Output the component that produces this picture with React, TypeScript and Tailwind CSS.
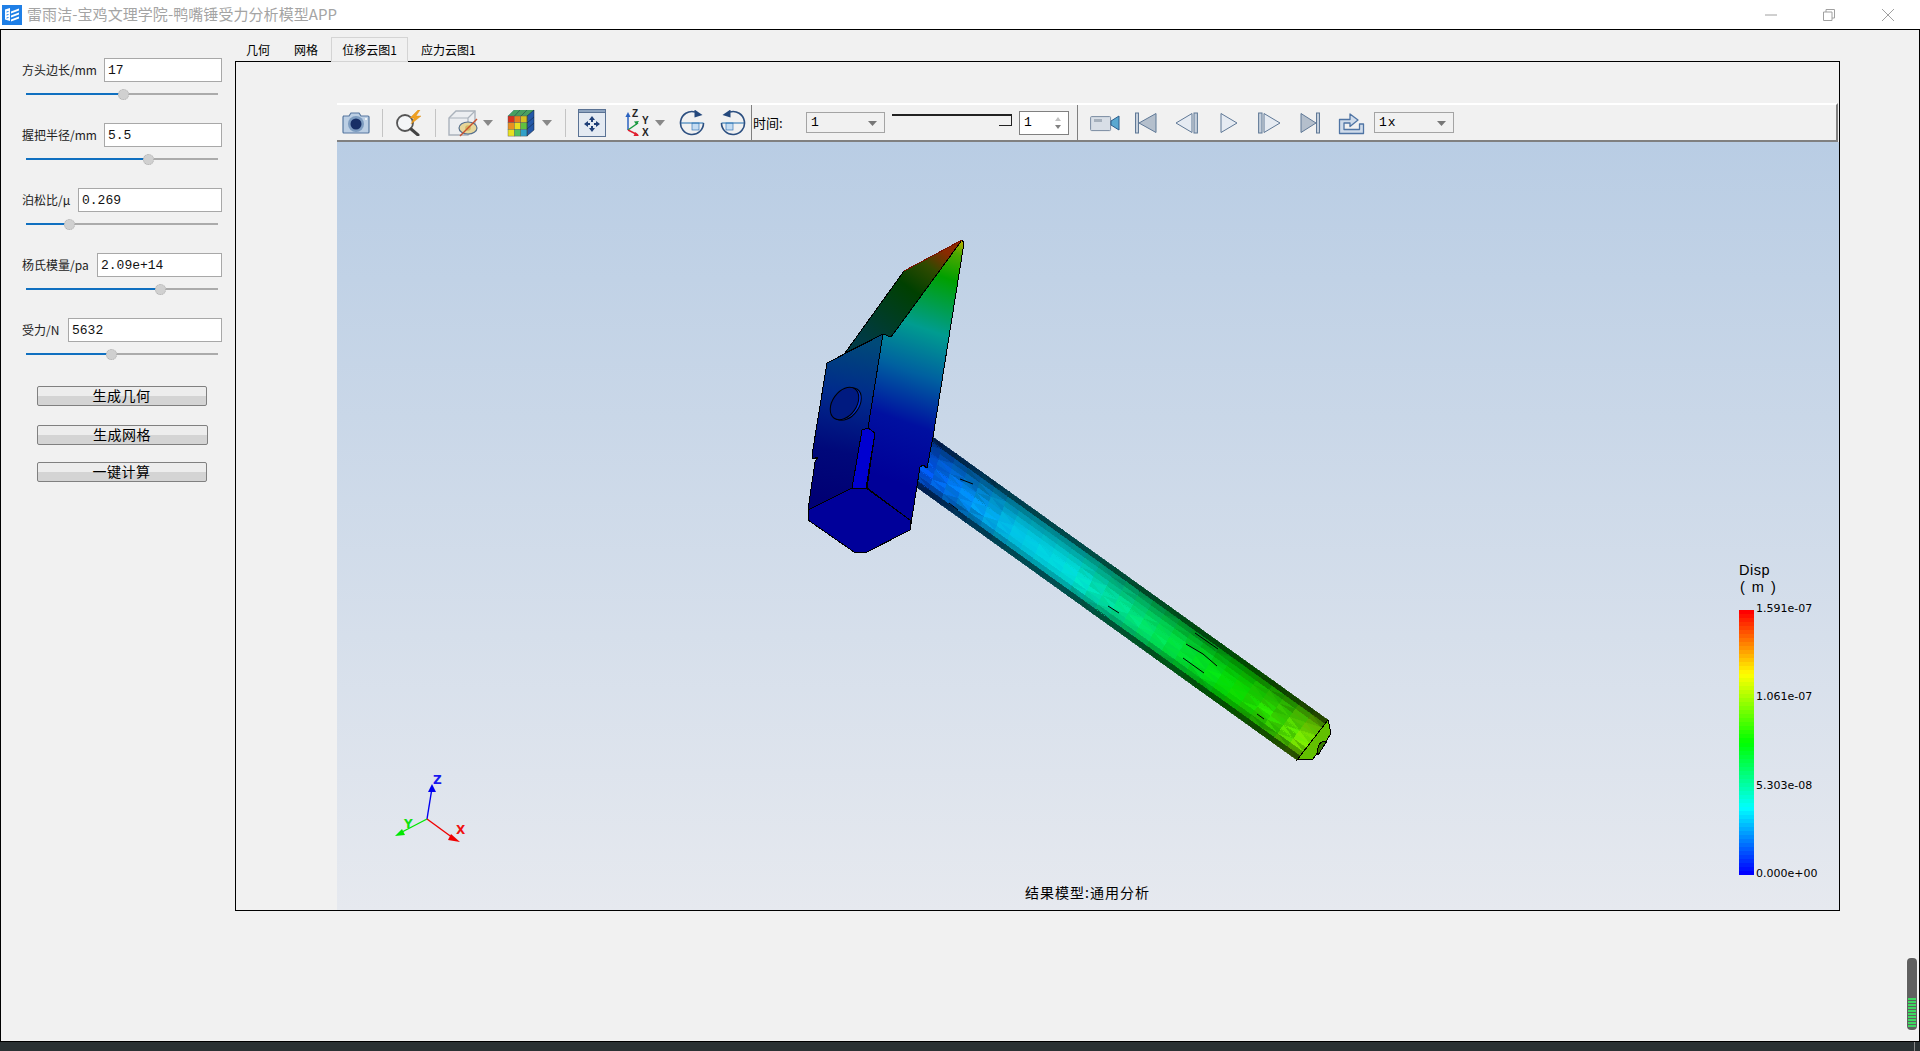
import React from "react";

const CJK = "font-['Noto_Sans_CJK_SC','Noto_Sans',sans-serif]";
const MONO = "font-['Liberation_Mono','Noto_Sans_CJK_SC',monospace]";

const params = [
  { label: "方头边长/mm", labelW: "w-[82px]", value: "17", fill: "w-[97px]" },
  { label: "握把半径/mm", labelW: "w-[82px]", value: "5.5", fill: "w-[122px]" },
  { label: "泊松比/μ", labelW: "w-[56px]", value: "0.269", fill: "w-[43px]" },
  { label: "杨氏模量/pa", labelW: "w-[75px]", value: "2.09e+14", fill: "w-[134px]" },
  { label: "受力/N", labelW: "w-[46px]", value: "5632", fill: "w-[85px]" },
];

function Param({ label, labelW, value, fill }: (typeof params)[number]) {
  return (
    <div className="flex h-[65px] flex-col">
      <div className="flex h-[24px] items-center">
        <span className={`${labelW} shrink-0 text-[12px] text-[#222] ${CJK}`}>{label}</span>
        <div className={`flex h-[24px] flex-1 items-center border border-[#a8a8a8] bg-white pl-[3px] pt-[1px] text-[13px] text-[#111] ${MONO}`}>
          {value}
        </div>
      </div>
      <div className="mx-[4px] mt-[7px] flex h-[10px] items-center">
        <div className={`h-[2px] ${fill} bg-[#1070c0]`} />
        <div className="relative z-10 -mx-[5px] h-[11px] w-[11px] shrink-0 rounded-full border border-dotted border-[#b0b0b0] bg-[#d0d0d0]" />
        <div className="h-[2px] flex-1 bg-[#ababab]" />
      </div>
    </div>
  );
}

function Btn({ children, className }: { children: React.ReactNode; className: string }) {
  return (
    <button className={`ml-[15px] flex h-[20px] items-center justify-center rounded-[2px] border border-[#808080] bg-[linear-gradient(#ededed_50%,#d4d4d4_50%)] pb-[2px] pr-[1px] text-[14px] tracking-[0.5px] text-black ${CJK} ${className}`}>
      {children}
    </button>
  );
}

const Sep = ({ ml }: { ml: string }) => <div className={`h-[28px] w-px shrink-0 bg-[#c4c4c4] ${ml}`} />;

const Tri = ({ ml }: { ml: string }) => (
  <svg width="10" height="6" viewBox="0 0 10 6" className={`shrink-0 ${ml}`}>
    <path d="M0 0H10L5 6Z" fill="#888" />
  </svg>
);

function Camera() {
  return (
    <svg width="28" height="24" viewBox="0 0 28 24" className="ml-[5px] shrink-0">
      <path d="M1 5h6l2-3h8l2 3h7a1 1 0 0 1 1 1v15a1 1 0 0 1-1 1H2a1 1 0 0 1-1-1V6a1 1 0 0 1 1-1z" fill="#bccfe4" stroke="#56779f" strokeWidth="1.2" />
      <circle cx="14" cy="13" r="8" fill="#7d9cc0" />
      <circle cx="14" cy="13" r="5.5" fill="#172f66" />
      <circle cx="24" cy="8" r="1" fill="#fff" />
    </svg>
  );
}
function Search() {
  return (
    <svg width="30" height="26" viewBox="0 0 30 26" className="ml-[12px] shrink-0">
      <circle cx="10" cy="13" r="8" fill="#f4f6f8" stroke="#555" strokeWidth="1.8" />
      <path d="M16 19L23 25" stroke="#444" strokeWidth="3" strokeLinecap="round" />
      <path d="M23 0L15 8h4l-3 6 10-8h-5l4-6z" fill="#f0a020" stroke="#d88a10" strokeWidth=".4" />
    </svg>
  );
}
function BoxEye() {
  return (
    <svg width="30" height="28" viewBox="0 0 30 28" className="ml-[12px] shrink-0">
      <path d="M1 9L8 2H27V19L20 26H1Z" fill="#eceef1" stroke="#aab2bc" strokeWidth="1.4" />
      <path d="M1 9H20V26M20 9L27 2" fill="none" stroke="#aab2bc" strokeWidth="1.2" />
      <ellipse cx="20" cy="19" rx="9" ry="6" fill="#e6d69a" stroke="#56708f" strokeWidth="1.2" />
      <circle cx="20" cy="19" r="2.8" fill="#d4b860" />
      <path d="M29 10L12 27" stroke="#c8502c" strokeWidth="1.4" />
    </svg>
  );
}
function ColorCube() {
  const rows = [
    ["#d83020", "#e88020", "#d8c020"],
    ["#e89020", "#e8e020", "#60c040"],
    ["#e8e020", "#50c060", "#30a0c8"],
  ];
  return (
    <svg width="28" height="28" viewBox="0 0 28 28" className="ml-[14px] shrink-0">
      <path d="M1 7L7 1H27V21L20 27V7Z" fill="#2458a8" />
      <path d="M1 7L7 1H27L20 7Z" fill="#48a060" />
      <path d="M13 1L7.5 7M20 1L14 7" stroke="#234" strokeWidth=".5" />
      {rows.map((r, j) =>
        r.map((c, i) => <rect key={`${i}${j}`} x={1 + i * 6.4} y={7 + j * 6.7} width="6.4" height="6.7" fill={c} stroke="#555" strokeWidth=".4" />),
      )}
      <path d="M20 7L27 1V21L20 27ZM20 14L27 8M20 20L27 14" fill="none" stroke="#123" strokeWidth=".5" />
    </svg>
  );
}
function Fit() {
  return (
    <svg width="28" height="28" viewBox="0 0 28 28" className="ml-[12px] shrink-0">
      <rect x=".5" y=".5" width="27" height="27" fill="#e4eaf2" stroke="#5a7294" />
      <rect x=".5" y=".5" width="27" height="3" fill="#8ea4c0" stroke="#5a7294" />
      <path d="M14 7l-3 4h2v2h2v-2h2zM14 23l-3-4h2v-2h2v2h2zM6 15l4-3v2h2v2h-2v2zM22 15l-4-3v2h-2v2h2v2z" fill="#1f3f78" />
    </svg>
  );
}
function AxesIcon() {
  return (
    <svg width="26" height="28" viewBox="0 0 26 28" className="ml-[18px] shrink-0">
      <path d="M4 21V6" stroke="#2a62c0" strokeWidth="1.5" />
      <path d="M4 3l-2.6 5h5.2z" fill="#2a62c0" />
      <path d="M4 21l10-7" stroke="#1a9a40" strokeWidth="1.5" />
      <path d="M15 12l-5 .5 2.5 3.5z" fill="#1a9a40" />
      <path d="M4 21l10 5" stroke="#e02030" strokeWidth="1.5" />
      <path d="M15 27l-3.5-4-2 4z" fill="#e02030" />
      <text x="8" y="8" fontSize="10" fontWeight="700" fontFamily="Liberation Sans" fill="#222">Z</text>
      <text x="18" y="15" fontSize="10" fontWeight="700" fontFamily="Liberation Sans" fill="#222">Y</text>
      <text x="18" y="27" fontSize="10" fontWeight="700" fontFamily="Liberation Sans" fill="#222">X</text>
    </svg>
  );
}
function Rotate({ flip, ml }: { flip?: boolean; ml: string }) {
  return (
    <svg width="26" height="26" viewBox="0 0 26 26" className={`shrink-0 ${ml}`} style={flip ? { transform: "scaleX(-1)" } : undefined}>
      <rect x="13" y="13" width="7" height="7" fill="#c4dcf2" stroke="#3a78b8" strokeWidth=".7" />
      <path d="M1.5 13H24.5" stroke="#1f6fb0" strokeWidth="1" />
      <path d="M24.5 13A11.5 11.5 0 1 1 16 1.9" fill="none" stroke="#2c4f80" strokeWidth="1.6" />
      <path d="M15.5 -.5L23.5 5 15.5 7.5Z" fill="#24487c" />
    </svg>
  );
}
function VideoCam() {
  return (
    <svg width="30" height="18" viewBox="0 0 30 18" className="ml-[12px] shrink-0">
      <rect x=".6" y="2.6" width="20" height="14" rx="1" fill="#d8dee6" stroke="#7a8ca2" />
      <rect x="4" y="5" width="8" height="3" fill="#a6b0bc" />
      <path d="M21 7l8-5v14l-8-5z" fill="#5aa8d0" stroke="#2a5c8c" />
    </svg>
  );
}
const pf = "#e6ebf2";
const ps = "#5f7896";
function First() {
  return (
    <svg width="22" height="22" viewBox="0 0 22 22" className="ml-[15px] shrink-0">
      <rect x=".5" y="1" width="3" height="20" fill="#c6d0dc" stroke={ps} />
      <path d="M21 1.5V20.5L4 11Z" fill="#b4bfcc" stroke={ps} />
    </svg>
  );
}
function Prev() {
  return (
    <svg width="23" height="22" viewBox="0 0 23 22" className="ml-[18px] shrink-0">
      <path d="M17 1.5V20.5L1 11Z" fill={pf} stroke={ps} />
      <rect x="19" y="1" width="3.4" height="20" fill="#c6d0dc" stroke={ps} />
    </svg>
  );
}
function Play() {
  return (
    <svg width="18" height="22" viewBox="0 0 18 22" className="ml-[22px] shrink-0">
      <path d="M1 1.5V20.5L17 11Z" fill={pf} stroke={ps} />
    </svg>
  );
}
function Next() {
  return (
    <svg width="23" height="22" viewBox="0 0 23 22" className="ml-[20px] shrink-0">
      <rect x=".6" y="1" width="3.4" height="20" fill="#c6d0dc" stroke={ps} />
      <path d="M6 1.5V20.5L22 11Z" fill={pf} stroke={ps} />
    </svg>
  );
}
function Last() {
  return (
    <svg width="20" height="22" viewBox="0 0 20 22" className="ml-[19px] shrink-0">
      <path d="M1 1.5V20.5L16 11Z" fill="#b4bfcc" stroke={ps} />
      <rect x="16.5" y="1" width="3" height="20" fill="#c6d0dc" stroke={ps} />
    </svg>
  );
}
function Export() {
  return (
    <svg width="27" height="24" viewBox="0 0 27 24" className="ml-[18px] shrink-0">
      <path d="M1.5 22.5V8.5H12V3L20 9L12 15.5V12H6V18.5H21.5V13H25.5V22.5Z" fill="#cfdbea" stroke="#4f74a4" strokeWidth="1.3" strokeLinejoin="round" />
    </svg>
  );
}

function Combo({ text, w, ml }: { text: string; w: string; ml: string }) {
  return (
    <div className={`flex h-[21px] shrink-0 items-center justify-between border border-[#a4a4a4] pl-[4px] pr-[7px] pt-[1px] text-[13px] tracking-[1px] text-black ${MONO} ${w} ${ml}`}>
      <span>{text}</span>
      <svg width="9" height="5" viewBox="0 0 9 5"><path d="M0 0H9L4.5 5Z" fill="#777" /></svg>
    </div>
  );
}

function TimeSlider() {
  return (
    <div className="ml-[7px] flex h-[24px] w-[120px] shrink-0 items-start pt-[2px]">
      <div className="mt-[1px] h-[2px] flex-1 bg-[#222]" />
      <div className="mt-[1px] h-[12px] w-[13px] border-r border-b border-[#222] bg-[#f1f1f1] shadow-[inset_0_2px_0_#222]" />
    </div>
  );
}

function Spin() {
  return (
    <div className={`ml-[7px] flex h-[24px] w-[50px] shrink-0 items-center justify-between border border-[#808080] bg-white pl-[4px] pr-[7px] pt-[1px] text-[13px] text-black ${MONO}`}>
      <span>1</span>
      <svg width="6" height="14" viewBox="0 0 6 14">
        <path d="M3 1L6 5H0Z" fill="#c0c0c0" />
        <path d="M3 13L0 9H6Z" fill="#808080" />
      </svg>
    </div>
  );
}

/* ---------- colour helpers for the 3D result ---------- */
type RGB = [number, number, number];
const hex = (c: RGB) => `rgb(${c.map((v) => Math.round(Math.max(0, Math.min(255, v)))).join(",")})`;
const stopsAlong: [number, RGB][] = [
  [0, [0, 80, 232]],
  [0.12, [0, 135, 232]],
  [0.24, [0, 195, 230]],
  [0.38, [0, 222, 220]],
  [0.52, [0, 224, 140]],
  [0.66, [0, 226, 60]],
  [0.8, [5, 222, 0]],
  [0.92, [55, 215, 0]],
  [1, [125, 220, 0]],
];
function along(t: number): RGB {
  for (let i = 1; i < stopsAlong.length; i++) {
    if (t <= stopsAlong[i][0]) {
      const [a, ca] = stopsAlong[i - 1];
      const [b, cb] = stopsAlong[i];
      const k = (t - a) / (b - a);
      return [0, 1, 2].map((n) => ca[n] + (cb[n] - ca[n]) * k) as RGB;
    }
  }
  return stopsAlong[stopsAlong.length - 1][1];
}
function shade(s: number) {
  const pts = [[0, 0.3], [0.06, 0.34], [0.09, 0.56], [0.2, 0.72], [0.34, 0.88], [0.5, 1], [0.72, 1], [0.84, 0.78], [0.92, 0.62], [0.95, 0.36], [1, 0.3]];
  for (let i = 1; i < pts.length; i++) {
    if (s <= pts[i][0]) {
      const k = (s - pts[i - 1][0]) / (pts[i][0] - pts[i - 1][0]);
      return pts[i - 1][1] + (pts[i][1] - pts[i - 1][1]) * k;
    }
  }
  return 0.3;
}
const rnd = (a: number, b: number) => {
  const v = Math.sin(a * 12.9898 + b * 78.233) * 43758.5453;
  return v - Math.floor(v);
};

function handlePoint(t: number, s: number): [number, number] {
  const A0 = [930, 435], A1 = [1328, 720], B0 = [915, 486], B1 = [1297, 760];
  const x0 = A0[0] + (B0[0] - A0[0]) * s, y0 = A0[1] + (B0[1] - A0[1]) * s;
  const x1 = A1[0] + (B1[0] - A1[0]) * s, y1 = A1[1] + (B1[1] - A1[1]) * s;
  return [x0 + (x1 - x0) * t, y0 + (y1 - y0) * t];
}

function HandleMesh() {
  const NX = 30, NY = 10;
  const tris: React.ReactNode[] = [];
  for (let i = 0; i < NX; i++) {
    for (let j = 0; j < NY; j++) {
      const t0 = i / NX, t1 = (i + 1) / NX, s0 = j / NY, s1 = (j + 1) / NY;
      const p = [handlePoint(t0, s0), handlePoint(t1, s0), handlePoint(t1, s1), handlePoint(t0, s1)];
      const flip = (i + j) % 2 === 0;
      const faces = flip ? [[0, 1, 2], [0, 2, 3]] : [[0, 1, 3], [1, 2, 3]];
      faces.forEach((f, k) => {
        const tm = (t0 + t1) / 2 + (k === 0 ? -0.006 : 0.006);
        const sm = (s0 + s1) / 2;
        const amp = tm < 0.2 || tm > 0.84 ? 0.2 : tm > 0.42 && tm < 0.76 ? 0.09 : 0.02;
        const l = shade(sm) * (1 + (rnd(i * 3 + k, j) - 0.5) * amp);
        const c = along(Math.max(0, tm));
        const fill = hex([c[0] * l, c[1] * l, c[2] * l]);
        tris.push(
          <polygon key={`${i}-${j}-${k}`} points={f.map((n) => p[n].join(",")).join(" ")} fill={fill} stroke={fill} strokeWidth="0.7" />,
        );
      });
    }
  }
  return <g>{tris}</g>;
}

function Hammer() {
  return (
    <svg viewBox="337 142 1502 768" className="absolute inset-0 h-full w-full">
      <defs>
        <linearGradient id="rightFace" gradientUnits="userSpaceOnUse" x1="972" y1="245" x2="890" y2="480">
          <stop offset="0" stopColor="#b8b000" />
          <stop offset="0.05" stopColor="#50a800" />
          <stop offset="0.16" stopColor="#00a000" />
          <stop offset="0.38" stopColor="#009c90" />
          <stop offset="0.56" stopColor="#0060a0" />
          <stop offset="0.76" stopColor="#0010a0" />
          <stop offset="1" stopColor="#000098" />
        </linearGradient>
        <linearGradient id="blade" gradientUnits="userSpaceOnUse" x1="940" y1="248" x2="870" y2="345">
          <stop offset="0" stopColor="#8a2a00" />
          <stop offset="0.18" stopColor="#304a00" />
          <stop offset="0.42" stopColor="#004000" />
          <stop offset="1" stopColor="#003a44" />
        </linearGradient>
        <linearGradient id="leftFace" gradientUnits="userSpaceOnUse" x1="862" y1="340" x2="830" y2="500">
          <stop offset="0" stopColor="#004a78" />
          <stop offset="0.35" stopColor="#002a8c" />
          <stop offset="0.7" stopColor="#00087a" />
          <stop offset="1" stopColor="#000074" />
        </linearGradient>
      </defs>
      <g shapeRendering="crispEdges">
        <HandleMesh />
        <polygon points="1328,720 1331,733 1327,740 1313,759 1297,760" fill="#62c000" stroke="#000" strokeWidth="1" />
        <path d="M1323 741C1318 744 1317 750 1318 755L1327 741Z" fill="#3a7a00" stroke="#000" strokeWidth="1" />
      </g>
      <g fill="none" stroke="#000" strokeWidth="1">
        <path d="M960 479L973 484" />
        <path d="M949 503L958 510" />
        <path d="M1108 606L1119 613" />
        <path d="M1195 633L1218 649" />
        <path d="M1186 644L1203 654L1217 666" />
        <path d="M1183 658L1204 673" />
        <path d="M1257 714L1264 719" />
      </g>
      <g stroke="#000" strokeWidth="1" strokeLinejoin="round" shapeRendering="crispEdges">
        <polygon points="845,353 883,334 891,337 962,240 904,271" fill="url(#blade)" />
        <polygon points="883,334 891,337 962,240 964,243 933,437 927,468 923,465 920,467 910,530 910,520 867,488 875,433 868,428" fill="url(#rightFace)" />
        <polygon points="827,363 883,334 868,428 862,430 852,488 808,510 815,462 818,457 813,459 812,455" fill="url(#leftFace)" />
        <polygon points="862,430 868,428 875,433 866,488 852,488" fill="#0000d0" />
        <polygon points="808,510 852,488 866,488 910,520 910,530 865,553 854,552 808,520" fill="#00009a" />
        <path d="M904 271L962 240" stroke="#7a1000" fill="none" />
      </g>
      <g stroke="#000" strokeWidth="1">
        <ellipse cx="847" cy="404" rx="12" ry="18" transform="rotate(35 847 404)" fill="#0030d8" />
        <ellipse cx="844.5" cy="403.5" rx="12" ry="18" transform="rotate(35 844.5 403.5)" fill="#001a80" />
      </g>
      {/* triad */}
      <g strokeWidth="1.4" fontFamily="DejaVu Sans" fontWeight="700" fontSize="12">
        <path d="M427 819L432 788" stroke="#0000f0" />
        <path d="M432 784l-4 8h8z" fill="#0000f0" />
        <text x="433" y="784" fill="#1818f0" stroke="none">Z</text>
        <path d="M427 819L402 832" stroke="#00e800" />
        <path d="M395 836l10-1-3-6z" fill="#00e800" />
        <text x="404" y="828" fill="#10e010" stroke="none">Y</text>
        <path d="M427 819L453 838" stroke="#f00000" />
        <path d="M460 842l-9-8-3 6z" fill="#f00000" />
        <text x="456" y="834" fill="#f01010" stroke="none">X</text>
      </g>
    </svg>
  );
}

function ColorBar() {
  const n = 66;
  const col = (f: number): string => {
    const st: [number, RGB][] = [[0, [255, 0, 0]], [0.24, [255, 255, 0]], [0.5, [0, 255, 0]], [0.75, [0, 255, 255]], [1, [0, 0, 255]]];
    for (let i = 1; i < st.length; i++) {
      if (f <= st[i][0]) {
        const k = (f - st[i - 1][0]) / (st[i][0] - st[i - 1][0]);
        return hex([0, 1, 2].map((m) => st[i - 1][1][m] + (st[i][1][m] - st[i - 1][1][m]) * k) as RGB);
      }
    }
    return "rgb(0,0,255)";
  };
  return (
    <svg width="15" height="265" viewBox="0 0 15 265" shapeRendering="crispEdges" className="shrink-0">
      {Array.from({ length: n }, (_, i) => (
        <rect key={i} x="0" y={(i * 265) / n} width="15" height={265 / n + 1} fill={col(i / (n - 1))} />
      ))}
    </svg>
  );
}

function Legend() {
  return (
    <div className="absolute left-[1402px] top-[420px] w-[90px] font-['DejaVu_Sans',sans-serif] text-black">
      <div className="font-['Liberation_Sans',sans-serif] text-[14.5px] leading-[17px] tracking-[0.5px]">Disp</div>
      <div className="pl-[1px] font-['Liberation_Sans',sans-serif] text-[14.5px] leading-[17px] tracking-[1.5px]">( m )</div>
      <div className="mt-[14px] flex">
        <ColorBar />
        <div className="-mt-[10px] ml-[2px] flex h-[283px] flex-col justify-between text-[11px] leading-[18px]">
          <span>1.591e-07</span>
          <span>1.061e-07</span>
          <span>5.303e-08</span>
          <span>0.000e+00</span>
        </div>
      </div>
    </div>
  );
}

export default function App() {
  return (
    <div className={`flex h-[1051px] w-[1920px] flex-col overflow-hidden bg-[#f1f1f1] ${CJK}`}>
      {/* title bar */}
      <div className="flex h-[30px] shrink-0 items-center border-b border-black bg-white">
        <svg width="20" height="20" viewBox="0 0 20 20" className="ml-[2px] shrink-0">
          <rect width="20" height="20" fill="#1f7fe6" />
          <path d="M3 4.5L8 3V16L3 14.5z" fill="#fff" />
          <path d="M9 6.5l8-3v2l-8 3zM9 10.5l8-3v2l-8 3zM9 14.5l8-3v2l-8 3z" fill="#fff" />
          <path d="M4.5 7l2-.5M4.5 10l2-.5M4.5 13l2-.5" stroke="#1f7fe6" strokeWidth="1" />
        </svg>
        <span className="ml-[5px] text-[15px] tracking-[0.07px] text-[#a4a4a4]">雷雨洁-宝鸡文理学院-鸭嘴锤受力分析模型APP</span>
        <div className="ml-auto flex items-center">
          <svg width="12" height="12" viewBox="0 0 12 12" className="shrink-0"><path d="M0 6H12" stroke="#a0a0a0" /></svg>
          <svg width="12" height="12" viewBox="0 0 12 12" className="ml-[46px] shrink-0">
            <path d="M.5 3h8.5v8.5H.5zM3 3V.5h8.5V9H9" fill="none" stroke="#a0a0a0" />
          </svg>
          <svg width="12" height="12" viewBox="0 0 12 12" className="ml-[47px] mr-[26px] shrink-0"><path d="M0 0L12 12M12 0L0 12" stroke="#a0a0a0" /></svg>
        </div>
      </div>

      {/* body */}
      <div className="flex min-h-0 flex-1 border-x border-black">
        <aside className="flex w-[234px] shrink-0 flex-col pl-[21px] pr-[13px] pt-[28px]">
          {params.map((p) => (
            <Param key={p.label} {...p} />
          ))}
          <Btn className="mt-[3px] w-[170px]">生成几何</Btn>
          <Btn className="mt-[19px] w-[171px]">生成网格</Btn>
          <Btn className="mt-[17px] w-[170px]">一键计算</Btn>
        </aside>

        <main className="flex-1 pt-[7px]">
          <div className="relative z-10 -mb-px flex h-[25px] items-center text-[12px] text-black">
            <span className="ml-[11px] w-[48px]">几何</span>
            <span className="w-[37px]">网格</span>
            <span className="flex h-[25px] w-[77px] items-center justify-center border border-[#d4d4d4] bg-[#f1f1f1]">位移云图1</span>
            <span className="ml-[13px]">应力云图1</span>
          </div>
          <div className="flex h-[850px] w-[1605px] flex-col border border-black">
            <div className="h-[41px] shrink-0" />
            <div className="flex min-h-0 flex-1 pl-[101px]">
              <div className="flex min-w-0 flex-1 flex-col">
                {/* toolbar */}
                <div className="mr-px flex h-[39px] shrink-0 items-center border-t-2 border-r-2 border-b-2 border-t-white border-r-[#808080] border-b-[#808080] bg-[#f1f1f1]">
                  <Camera />
                  <Sep ml="ml-[12px]" />
                  <Search />
                  <Sep ml="ml-[10px]" />
                  <BoxEye />
                  <Tri ml="ml-[5px]" />
                  <ColorCube />
                  <Tri ml="ml-[7px]" />
                  <Sep ml="ml-[13px]" />
                  <Fit />
                  <AxesIcon />
                  <Tri ml="ml-[5px]" />
                  <Rotate ml="ml-[14px]" />
                  <Rotate flip ml="ml-[15px]" />
                  <div className="ml-[5px] h-full w-px shrink-0 bg-[#808080]" />
                  <span className={`ml-[1px] w-[38px] shrink-0 whitespace-nowrap text-[13px] text-black ${CJK}`}>时间:</span>
                  <Combo text="1" w="w-[79px]" ml="ml-[15px]" />
                  <TimeSlider />
                  <Spin />
                  <div className="ml-[8px] h-full w-px shrink-0 bg-[#808080]" />
                  <VideoCam />
                  <First />
                  <Prev />
                  <Play />
                  <Next />
                  <Last />
                  <Export />
                  <Combo text="1x" w="w-[80px]" ml="ml-[9px]" />
                </div>
                {/* viewport */}
                <div className="relative min-h-0 flex-1 bg-[linear-gradient(#b9cde4,#e6e9ef)]">
                  <Hammer />
                  <Legend />
                  <div className="absolute bottom-[9px] left-[688px] text-[14px] leading-[18px] tracking-[1px] text-black">结果模型:通用分析</div>
                </div>
              </div>
            </div>
          </div>
        </main>
      </div>

      {/* desktop strip */}
      <div className="flex h-[10px] shrink-0 justify-end border-t border-black bg-[#2a3133] pr-[5px]">
        <div className="h-full w-px bg-[#8a8a8a]" />
      </div>

      {/* floating meter */}
      <div className="absolute left-[1907px] top-[958px] flex h-[72px] w-[10px] flex-col justify-end gap-[1px] rounded-[4px] bg-[#606060] px-[1px] pb-[3px] shadow-[0_0_2px_#fff]">
        {Array.from({ length: 10 }, (_, i) => (
          <div key={i} className="h-[2px] bg-[#3dd860]" />
        ))}
      </div>
    </div>
  );
}
